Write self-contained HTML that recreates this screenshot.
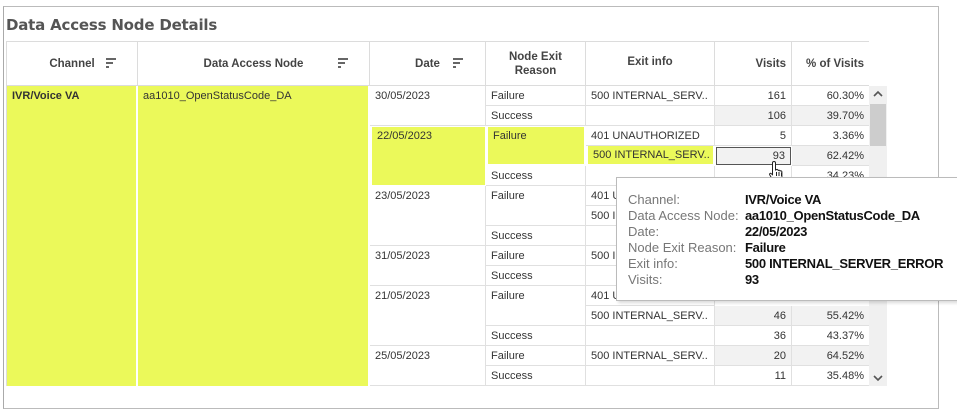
<!DOCTYPE html><html><head><style>
body{margin:0;width:957px;height:416px;background:#fff;position:relative;overflow:hidden;font-family:"Liberation Sans",Arial,sans-serif;}
.c{position:absolute;box-sizing:border-box;font-size:11px;color:#333;padding:4px 5px;white-space:nowrap;overflow:hidden;border-right:1px solid #e0e0e0;border-bottom:1px solid #e0e0e0;}
.r{text-align:right;}
.y{background:#ebf95a;}
.g{background:#f2f2f2;}
.h{position:absolute;box-sizing:border-box;font-size:11.5px;font-weight:bold;color:#444;text-align:center;border-right:1px solid #dcdcdc;display:flex;align-items:center;justify-content:center;line-height:14px;}
.s{position:absolute;width:10px;}
.s i{display:block;height:2px;background:#666;margin-bottom:2px}
</style></head><body>
<div style="position:absolute;left:3px;top:6px;width:934px;height:401px;border:1px solid #aaa;border-top-color:#bbb;border-bottom-color:#bbb;border-right-color:#bbb"></div>
<div style="position:absolute;left:6px;top:16px;font-size:15px;font-weight:bold;color:#555;font-family:'DejaVu Sans',sans-serif;letter-spacing:-0.2px">Data Access Node Details</div>
<div style="position:absolute;left:6px;top:41px;width:863px;height:1px;background:#dcdcdc"></div>
<div style="position:absolute;left:6px;top:41px;width:1px;height:345px;background:#dcdcdc"></div>
<div class="h" style="left:7px;top:42px;width:131px;height:43px">Channel</div>
<div class="h" style="left:138px;top:42px;width:232px;height:43px">Data Access Node</div>
<div class="h" style="left:370px;top:42px;width:116px;height:43px">Date</div>
<div class="h" style="left:486px;top:42px;width:100px;height:43px">Node Exit<br>Reason</div>
<div class="h" style="left:586px;top:42px;width:129px;height:43px;padding-bottom:4px">Exit info</div>
<div class="h" style="left:715px;top:42px;width:77px;height:43px;justify-content:flex-end;padding-right:5px">Visits</div>
<div class="h" style="left:792px;top:42px;width:77px;height:43px;justify-content:flex-end;padding-right:5px;border-right:none">% of Visits</div>
<div class="s" style="left:106px;top:58px"><i></i><i style="width:7px"></i><i style="width:3px"></i></div>
<div class="s" style="left:338px;top:58px"><i></i><i style="width:7px"></i><i style="width:3px"></i></div>
<div class="s" style="left:453px;top:58px"><i></i><i style="width:7px"></i><i style="width:3px"></i></div>
<div style="position:absolute;left:6px;top:85px;width:863px;height:1px;background:#dcdcdc"></div>

<div class="c y" style="left:7px;top:86px;width:129px;height:300px;font-weight:bold;border:none">IVR/Voice VA</div>
<div class="c" style="left:136px;top:86px;width:2px;height:300px;border:none;background:#fff;padding:0"></div>
<div class="c y" style="left:138px;top:86px;width:230px;height:300px;border:none">aa1010_OpenStatusCode_DA</div>

<div class="c" style="left:370px;top:86px;width:116px;height:40px">30/05/2023</div>
<div class="c y" style="left:372px;top:127px;width:113px;height:58px;border:none;padding-top:3px">22/05/2023</div>
<div class="c" style="left:370px;top:186px;width:116px;height:60px">23/05/2023</div>
<div class="c" style="left:370px;top:246px;width:116px;height:40px">31/05/2023</div>
<div class="c" style="left:370px;top:286px;width:116px;height:60px">21/05/2023</div>
<div class="c" style="left:370px;top:346px;width:116px;height:40px">25/05/2023</div>

<div class="c" style="left:486px;top:86px;width:100px;height:20px">Failure</div>
<div class="c" style="left:486px;top:106px;width:100px;height:20px">Success</div>
<div class="c y" style="left:488px;top:127px;width:96px;height:37px;border:none;padding-top:3px">Failure</div>
<div class="c" style="left:486px;top:166px;width:100px;height:20px">Success</div>
<div class="c" style="left:486px;top:186px;width:100px;height:40px">Failure</div>
<div class="c" style="left:486px;top:226px;width:100px;height:20px">Success</div>
<div class="c" style="left:486px;top:246px;width:100px;height:20px">Failure</div>
<div class="c" style="left:486px;top:266px;width:100px;height:20px">Success</div>
<div class="c" style="left:486px;top:286px;width:100px;height:40px">Failure</div>
<div class="c" style="left:486px;top:326px;width:100px;height:20px">Success</div>
<div class="c" style="left:486px;top:346px;width:100px;height:20px">Failure</div>
<div class="c" style="left:486px;top:366px;width:100px;height:20px">Success</div>

<div class="c" style="left:586px;top:86px;width:129px;height:20px">500 INTERNAL_SERV..</div>
<div class="c" style="left:586px;top:106px;width:129px;height:20px"></div>
<div class="c" style="left:586px;top:126px;width:129px;height:20px">401 UNAUTHORIZED</div>
<div class="c y" style="left:588px;top:146px;width:125px;height:18px;border:none;padding-top:3px">500 INTERNAL_SERV..</div>
<div class="c" style="left:586px;top:166px;width:129px;height:20px"></div>
<div class="c" style="left:586px;top:186px;width:129px;height:20px">401 UNAUTHORIZED</div>
<div class="c" style="left:586px;top:206px;width:129px;height:20px">500 INTERNAL_SERV..</div>
<div class="c" style="left:586px;top:226px;width:129px;height:20px"></div>
<div class="c" style="left:586px;top:246px;width:129px;height:20px">500 INTERNAL_SERV..</div>
<div class="c" style="left:586px;top:266px;width:129px;height:20px"></div>
<div class="c" style="left:586px;top:286px;width:129px;height:20px">401 UNAUTHORIZED</div>
<div class="c" style="left:586px;top:306px;width:129px;height:20px">500 INTERNAL_SERV..</div>
<div class="c" style="left:586px;top:326px;width:129px;height:20px"></div>
<div class="c" style="left:586px;top:346px;width:129px;height:20px">500 INTERNAL_SERV..</div>
<div class="c" style="left:586px;top:366px;width:129px;height:20px"></div>

<div class="c r" style="left:715px;top:86px;width:77px;height:20px">161</div><div class="c r" style="left:792px;top:86px;width:77px;height:20px;border-right:none">60.30%</div>
<div class="c r g" style="left:715px;top:106px;width:77px;height:20px">106</div><div class="c r g" style="left:792px;top:106px;width:77px;height:20px;border-right:none">39.70%</div>
<div class="c r" style="left:715px;top:126px;width:77px;height:20px">5</div><div class="c r" style="left:792px;top:126px;width:77px;height:20px;border-right:none">3.36%</div>
<div class="c r g" style="left:716px;top:147px;width:75px;height:18px;border:1px solid #555;padding-top:2px">93</div><div class="c r g" style="left:792px;top:146px;width:77px;height:20px;border-right:none">62.42%</div>
<div class="c r" style="left:715px;top:166px;width:77px;height:20px"></div><div class="c r" style="left:792px;top:166px;width:77px;height:20px;border-right:none">34.23%</div>
<div class="c r g" style="left:715px;top:306px;width:77px;height:20px">46</div><div class="c r g" style="left:792px;top:306px;width:77px;height:20px;border-right:none">55.42%</div>
<div class="c r" style="left:715px;top:326px;width:77px;height:20px">36</div><div class="c r" style="left:792px;top:326px;width:77px;height:20px;border-right:none">43.37%</div>
<div class="c r g" style="left:715px;top:346px;width:77px;height:20px">20</div><div class="c r g" style="left:792px;top:346px;width:77px;height:20px;border-right:none">64.52%</div>
<div class="c r" style="left:715px;top:366px;width:77px;height:20px">11</div><div class="c r" style="left:792px;top:366px;width:77px;height:20px;border-right:none">35.48%</div>

<div style="position:absolute;left:869px;top:86px;width:18px;height:300px;background:#f0f0f0"></div>
<div style="position:absolute;left:870px;top:104px;width:16px;height:42px;background:#cdcdcd"></div>
<svg style="position:absolute;left:873px;top:90px" width="10" height="8"><path d="M1 6L5 2L9 6" stroke="#555" stroke-width="1.6" fill="none"/></svg>
<svg style="position:absolute;left:873px;top:374px" width="10" height="8"><path d="M1 2L5 6L9 2" stroke="#555" stroke-width="1.6" fill="none"/></svg>

<svg style="position:absolute;left:768px;top:160px" width="18" height="22" viewBox="0 0 18 22"><path d="M6 1.5c1 0 1.5.6 1.5 1.5v7l1-.5c.6-.3 1.4 0 1.5.7l.3.3c.6-.5 1.6-.3 1.8.5.6-.4 1.6-.2 1.8.7v5c0 2.5-1.8 4.3-4.3 4.3h-2c-1.6 0-2.5-.8-3.4-2L1.8 15c-.6-.8 0-1.9 1-1.7l1.7 1.4V3c0-.9.5-1.5 1.5-1.5z" fill="#fff" stroke="#222" stroke-width="1"/><path d="M8.5 12v4M11 12v4M13.5 12.5v3.5" stroke="#222"/></svg>

<div style="position:absolute;left:616px;top:177px;width:345px;height:122px;background:#fff;border:1px solid #bbb;box-shadow:2px 2px 3px rgba(0,0,0,.15);font-size:13px;line-height:16px">
<div style="position:absolute;left:11px;top:14px;color:#777">Channel:<br>Data Access Node:<br>Date:<br>Node Exit Reason:<br>Exit info:<br>Visits:</div>
<div style="position:absolute;left:128px;top:14px;color:#111;font-weight:bold;letter-spacing:-0.3px">IVR/Voice VA<br>aa1010_OpenStatusCode_DA<br>22/05/2023<br>Failure<br>500 INTERNAL_SERVER_ERROR<br>93</div>
</div>
</body></html>
